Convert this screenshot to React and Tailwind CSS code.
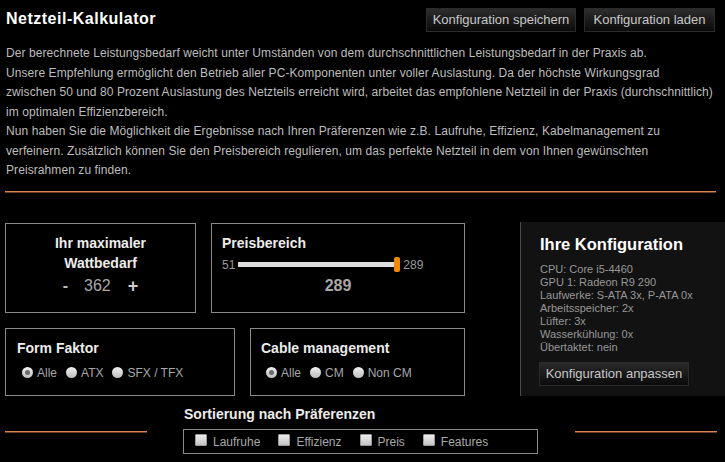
import React, { useState } from "react";

const font = { fontFamily: '"Liberation Sans", Arial, sans-serif' };

const Radio = ({ label, checked, onClick }) => (
  <label onClick={onClick} className="flex items-center cursor-pointer">
    <span className="w-[11px] h-[11px] rounded-full bg-linear-to-b from-[#f2f2f2] to-[#bdbdbd] flex items-center justify-center">
      {checked && <span className="w-[5px] h-[5px] rounded-full bg-[#6a6a6a]" />}
    </span>
    <span className="ml-[4px] text-[12px] text-[#a8a8a8]">{label}</span>
  </label>
);

const Check = ({ label }) => (
  <label className="flex items-start">
    <span className="w-[12px] h-[12px] mt-[4px] rounded-[1px] bg-linear-to-b from-[#eeeeee] to-[#c4c4c4] border border-[#9a9a9a]" />
    <span className="ml-[6px] mt-[2px] text-[12px] leading-[20px] text-[#a8a8a8]">{label}</span>
  </label>
);

export default function App() {
  const [watt, setWatt] = useState(362);
  const [form, setForm] = useState("Alle");
  const [cable, setCable] = useState("Alle");

  return (
    <div style={font} className="w-[725px] h-[462px] bg-black overflow-hidden">
      {/* Header */}
      <div className="flex items-start justify-between pl-[6px] pr-[10px] pt-[8px]">
        <h1 className="h-[22px] flex items-center text-[16px] tracking-[0.5px] font-bold text-white">Netzteil-Kalkulator</h1>
        <div className="flex gap-[8px]">
          <button className="w-[150px] h-[24px] bg-linear-to-b from-[#2d2d2d] to-[#0b0b0b] border border-[#2b2b2b] text-[13px] text-[#c8c8c8]">
            Konfiguration speichern
          </button>
          <button className="w-[131px] h-[24px] bg-linear-to-b from-[#2d2d2d] to-[#0b0b0b] border border-[#2b2b2b] text-[13px] text-[#c8c8c8]">
            Konfiguration laden
          </button>
        </div>
      </div>

      {/* Intro */}
      <p className="mt-[12px] px-[6px] text-[12px] leading-[19.5px] tracking-[0.08px] text-[#bdbdbd] whitespace-nowrap">
        Der berechnete Leistungsbedarf weicht unter Umständen von dem durchschnittlichen Leistungsbedarf in der Praxis ab.<br />
        Unsere Empfehlung ermöglicht den Betrieb aller PC-Komponenten unter voller Auslastung. Da der höchste Wirkungsgrad<br />
        zwischen 50 und 80 Prozent Auslastung des Netzteils erreicht wird, arbeitet das empfohlene Netzteil in der Praxis (durchschnittlich)<br />
        im optimalen Effizienzbereich.<br />
        Nun haben Sie die Möglichkeit die Ergebnisse nach Ihren Präferenzen wie z.B. Laufruhe, Effizienz, Kabelmanagement zu<br />
        verfeinern. Zusätzlich können Sie den Preisbereich regulieren, um das perfekte Netzteil in dem von Ihnen gewünschten<br />
        Preisrahmen zu finden.
      </p>

      <div className="mt-[10px] ml-[5px] w-[711px] h-px bg-[#d4884f] shadow-[0_1px_0_#6a3a1c]" />

      {/* Main area */}
      <div className="flex mt-[31px]">
        <div className="pl-[5px] w-[465px]">
          <div className="flex gap-[15px]">
            <div className="w-[191px] h-[90px] border border-[#8a8a8a] pt-[9px] text-center">
              <div className="text-[14px] font-bold leading-[20px] text-[#ececec]">Ihr maximaler<br />Wattbedarf</div>
              <div className="mt-[3px] flex justify-center items-center leading-[20px] text-[16px] text-[#a8a8a8]">
                <button onClick={() => setWatt(watt - 1)} className="font-bold text-[#bbb] mr-[16px]">-</button>
                <span>{watt}</span>
                <button onClick={() => setWatt(watt + 1)} className="font-bold text-[#ccc] ml-[17px] text-[18px]">+</button>
              </div>
            </div>
            <div className="w-[254px] h-[90px] border border-[#8a8a8a] pt-[11px] pl-[10px]">
              <div className="text-[14px] font-bold leading-[16px] text-[#ececec]">Preisbereich</div>
              <div className="mt-[6px] flex items-center h-[16px] text-[12px] text-[#9a9a9a]">
                <span>51</span>
                <div className="relative ml-[3px] w-[158px] h-[5px] bg-[#dedede]">
                  <span className="absolute right-[-4px] top-[-5px] w-[6px] h-[15px] rounded-[2px] bg-[#f08a00]" />
                </div>
                <span className="ml-[7px]">289</span>
              </div>
              <div className="mt-[3px] pr-[10px] text-center text-[16px] font-bold leading-[20px] text-[#a8a8a8]">289</div>
            </div>
          </div>

          <div className="flex gap-[15px] mt-[15px]">
            <div className="w-[230px] h-[68px] border border-[#8a8a8a] pt-[11px] pl-[11px]">
              <div className="text-[14px] font-bold leading-[16px] text-[#ececec]">Form Faktor</div>
              <div className="mt-[9px] ml-[5px] flex gap-[9px] leading-[16px]">
                {["Alle", "ATX", "SFX / TFX"].map((l) => (
                  <Radio key={l} label={l} checked={form === l} onClick={() => setForm(l)} />
                ))}
              </div>
            </div>
            <div className="w-[215px] h-[68px] border border-[#8a8a8a] pt-[11px] pl-[10px]">
              <div className="text-[14px] font-bold leading-[16px] text-[#ececec]">Cable management</div>
              <div className="mt-[9px] ml-[5px] flex gap-[9px] leading-[16px]">
                {["Alle", "CM", "Non CM"].map((l) => (
                  <Radio key={l} label={l} checked={cable === l} onClick={() => setCable(l)} />
                ))}
              </div>
            </div>
          </div>
        </div>

        {/* Config panel */}
        <div className="ml-auto -mt-px w-[205px] h-[174px] bg-[#121212] border-l border-[#4a4a4a] pl-[19px] pt-[12px]">
          <div className="text-[16.5px] font-bold leading-[20px] text-white">Ihre Konfiguration</div>
          <ul className="mt-[9px] text-[11px] leading-[13px] text-[#979797]">
            <li>CPU: Core i5-4460</li>
            <li>GPU 1: Radeon R9 290</li>
            <li>Laufwerke: S-ATA 3x, P-ATA 0x</li>
            <li>Arbeitsspeicher: 2x</li>
            <li>Lüfter: 3x</li>
            <li>Wasserkühlung: 0x</li>
            <li>Übertaktet: nein</li>
          </ul>
          <button className="mt-[8px] -ml-px w-[150px] h-[24px] bg-linear-to-b from-[#2a2a2a] to-[#0b0b0b] border border-[#2b2b2b] text-[13px] text-[#c8c8c8]">
            Konfiguration anpassen
          </button>
        </div>
      </div>

      {/* Sorting */}
      <div className="flex mt-[10px]">
        <div className="w-[147px] pl-[5px] pt-[25px]">
          <div className="h-px bg-[#d4884f] shadow-[0_1px_0_#6a3a1c]" />
        </div>
        <div className="ml-[36px] w-[355px]">
          <div className="pl-px text-[14px] font-bold leading-[16px] text-[#ececec]">Sortierung nach Präferenzen</div>
          <div className="mt-[7px] h-[25px] border border-[#8a8a8a] pl-[11px] flex gap-[18px]">
            <Check label="Laufruhe" />
            <Check label="Effizienz" />
            <Check label="Preis" />
            <Check label="Features" />
          </div>
        </div>
        <div className="ml-[37px] w-[142px] pt-[25px]">
          <div className="h-px bg-[#d4884f] shadow-[0_1px_0_#6a3a1c]" />
        </div>
      </div>
    </div>
  );
}
